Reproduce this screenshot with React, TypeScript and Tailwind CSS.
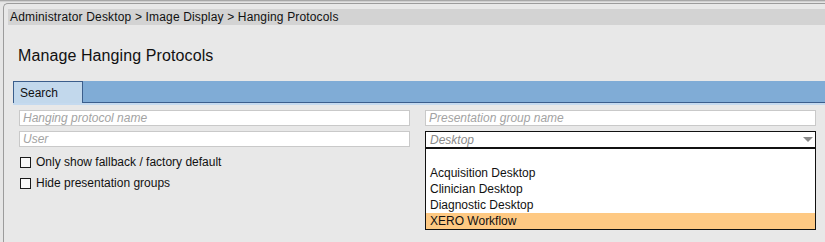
import React from "react";

const font = { fontFamily: '"Liberation Sans", Arial, sans-serif' };

function Input({ placeholder }: { placeholder: string }) {
  return (
    <div className="h-[16px] border border-[#c9c9c9] bg-white flex items-center pl-[3px] text-[12px] leading-[14px] italic text-[#a3a3a3] whitespace-nowrap overflow-hidden">
      {placeholder}
    </div>
  );
}

function Check({ label }: { label: string }) {
  return (
    <div className="flex items-center h-[16px]">
      <div className="w-[11px] h-[11px] border border-[#1a1a1a] bg-[#f8f8f8] ml-[1px]" />
      <span className="ml-[5px] text-[12px] leading-[16px] text-[#111]">{label}</span>
    </div>
  );
}

export default function App() {
  const items = ["", "Acquisition Desktop", "Clinician Desktop", "Diagnostic Desktop", "XERO Workflow"];
  return (
    <div className="w-[825px] h-[242px] overflow-hidden bg-[#e6e6e6] flex flex-col" style={font}>
      <div className="h-px bg-[#a8a8a8] shrink-0" />
      <div className="h-px bg-[#d0d0d0] shrink-0" />
      <div className="h-px bg-[#e4e4e4] shrink-0" />
      <div className="ml-[3px] w-[840px] h-[260px] shrink-0 border-l border-t border-[#9c9c9c] rounded-tl-[5px] bg-[#e8e8e8] flex flex-col">
        <div className="ml-[4px] mt-[5px] h-[16px] bg-[#d3d3d3] pl-[2px] text-[12px] leading-[16px] tracking-[0.16px] text-[#111] whitespace-nowrap">
          Administrator Desktop &gt; Image Display &gt; Hanging Protocols
        </div>
        <div className="ml-[14px] mt-[22px] text-[16px] leading-[18px] tracking-[0.1px] text-[#111]">Manage Hanging Protocols</div>
        <div className="ml-[9px] mt-[16px] flex flex-col">
          <div className="flex h-[22px]">
            <div className="w-[70px] h-[22px] bg-[#c2d8ec] border-l border-t border-r border-[#3b5e8c] pl-[6px] text-[12px] leading-[20px] pt-[1px] text-[#111]">
              Search
            </div>
            <div className="flex-1 bg-[#80acd6] border-b border-[#3b5e8c]" />
          </div>
          <div className="h-[2px] bg-[#c5daef]" />
        </div>
        <div className="ml-[15px] mt-[5px] flex gap-[15px]">
          <div className="w-[391px] flex flex-col">
            <Input placeholder="Hanging protocol name" />
            <div className="mt-[5px]">
              <Input placeholder="User" />
            </div>
            <div className="mt-[7px]">
              <Check label="Only show fallback / factory default" />
            </div>
            <div className="mt-[5px]">
              <Check label="Hide presentation groups" />
            </div>
          </div>
          <div className="w-[391px] flex flex-col">
            <Input placeholder="Presentation group name" />
            <div className="mt-[5px] h-[17px] border border-[#111] bg-white flex items-center justify-between pl-[4px] pr-[2px]">
              <span className="text-[12px] leading-[14px] italic text-[#8a8a8a]">Desktop</span>
              <svg width="10" height="5" viewBox="0 0 10 5">
                <polygon points="0,0 10,0 5,5" fill="#8a8a8a" />
              </svg>
            </div>
            <div className="border border-[#111] bg-white flex flex-col">
              {items.map((it, i) => (
                <div
                  key={i}
                  className={
                    "h-[16px] pl-[4px] text-[12px] leading-[16px] text-[#111] " +
                    (it === "XERO Workflow" ? "bg-[#fec983]" : "")
                  }
                >
                  {it}
                </div>
              ))}
            </div>
          </div>
        </div>
      </div>
    </div>
  );
}
